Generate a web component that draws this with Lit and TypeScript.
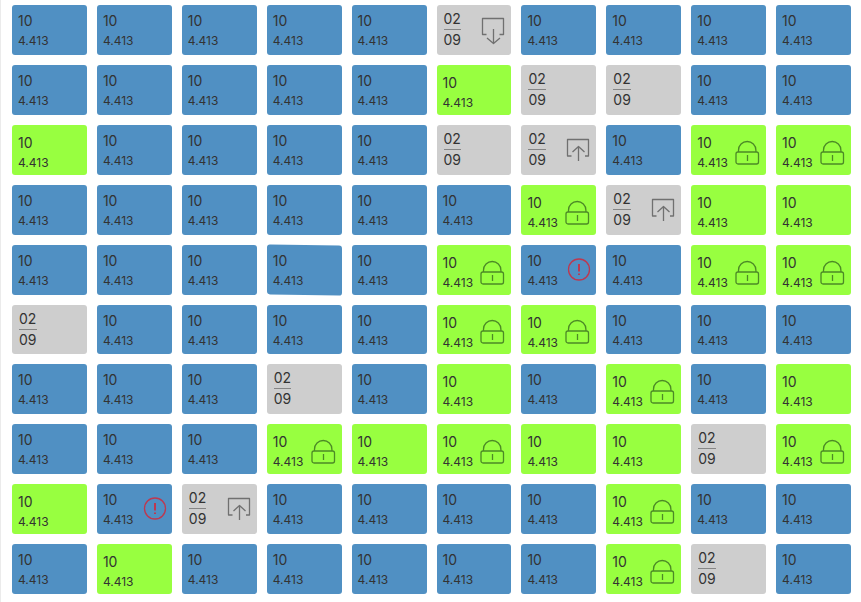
import { LitElement, html, css, svg, nothing } from "lit";
import { customElement, property } from "lit/decorators.js";
import { classMap } from "lit/directives/class-map.js";

type Icon = "lock" | "in" | "out" | "alert";

interface Tile {
  kind: "blue" | "green" | "grey";
  icon?: Icon;
  tilted?: boolean;
}

const KINDS: Record<string, Tile> = {
  B: { kind: "blue" },
  T: { kind: "blue", tilted: true },
  A: { kind: "blue", icon: "alert" },
  G: { kind: "green" },
  L: { kind: "green", icon: "lock" },
  N: { kind: "grey" },
  U: { kind: "grey", icon: "in" },
  D: { kind: "grey", icon: "out" },
};

const ROWS = [
  "BBBBBDBBBB",
  "BBBBBGNNBB",
  "GBBBBNUBLL",
  "BBBBBBLUGG",
  "BBBTBLABLL",
  "NBBBBLLBBB",
  "BBBNBGBLBG",
  "BBBLGLGGNL",
  "GAUBBBBLBB",
  "BGBBBBBLNB",
];

const ICONS = {
  lock: svg`
    <rect x="1" y="18" width="22.500" height="12" rx="2" />
    <path d="M3.500 18V16.200A8.700 8.700 0 0 1 20.900 16.200V18" />
    <path d="M12.500 21V27" />`,
  in: svg`
    <path d="M6.500 22H2.500V5.500H23.500V22H20" />
    <path d="M13.500 27V12.500M7.500 18L13.500 12.500L19.500 18" />`,
  out: svg`
    <path d="M6.500 20.500H2.500V4.500H23.500V20.500H19.500" />
    <path d="M13.500 15V29.500M7 24L13.500 29.500L20 24" />`,
  alert: svg`
    <circle cx="14" cy="15.500" r="10.500" />
    <path class="bang" d="M14 10V17.500M14 19.500V21" />`,
};

@customElement("board-tile")
export class BoardTile extends LitElement {
  @property({ attribute: false }) tile: Tile = KINDS.B;

  static styles = css`
    :host {
      display: block;
      min-width: 0;
    }
    .tile {
      position: relative;
      isolation: isolate;
      display: flex;
      justify-content: space-between;
      box-sizing: border-box;
      height: 100%;
      padding: 0 7px 0 6px;
      color: #333;
      line-height: 20px;
    }
    .tile::before {
      content: "";
      position: absolute;
      inset: 0;
      z-index: -1;
      border-radius: 3px;
      background: #5090c3;
    }
    .green::before {
      background: #98ff40;
    }
    .grey::before {
      background: #cecece;
    }
    .tilted::before {
      transform: skewY(1deg);
    }
    .text {
      padding-top: 6px;
    }
    .green .text {
      padding-top: 8px;
    }
    .grey .text {
      padding: 4px 0 0 1px;
    }
    .main,
    .sub {
      display: block;
      font-size: 14px;
    }
    .sub {
      font-size: 12px;
    }
    .grey .sub {
      border-top: 1px solid #858585;
      font-size: 14px;
    }
    svg {
      flex: none;
      align-self: center;
      overflow: visible;
      fill: none;
      stroke: #707070;
      stroke-width: 1.3;
      stroke-linejoin: round;
    }
    .green svg {
      stroke: #4c8a26;
    }
    .blue svg {
      stroke: #bd3850;
    }
    .bang {
      stroke-width: 2;
    }
  `;

  render() {
    const { kind, icon, tilted } = this.tile;
    const grey = kind === "grey";
    return html`
      <div class=${classMap({ tile: true, [kind]: true, tilted: !!tilted })}>
        <div class="text">
          <span class="main">${grey ? "02" : "10"}</span>
          <span class="sub">${grey ? "09" : "4.413"}</span>
        </div>
        ${icon
          ? html`<svg width="24" height="32" viewBox="0 0 24 32" aria-hidden="true">${ICONS[icon]}</svg>`
          : nothing}
      </div>
    `;
  }
}

@customElement("app-root")
export class AppRoot extends LitElement {
  static styles = css`
    :host {
      display: block;
      font-family: Inter, sans-serif;
      background: #fff;
    }
    .board {
      display: grid;
      grid-template-columns: repeat(10, minmax(0, 1fr));
      grid-auto-rows: minmax(48px, 1fr);
      gap: 10px;
      box-sizing: border-box;
      min-height: 100vh;
      margin: 0;
      padding: 5px 10px 8px 11px;
      border-left: 1px solid #ebebeb;
      list-style: none;
    }
    .cell {
      display: grid;
    }
  `;

  render() {
    return html`
      <ul class="board">
        ${ROWS.flatMap((row) =>
          [...row].map(
            (code) => html`<li class="cell"><board-tile .tile=${KINDS[code]}></board-tile></li>`
          )
        )}
      </ul>
    `;
  }
}
